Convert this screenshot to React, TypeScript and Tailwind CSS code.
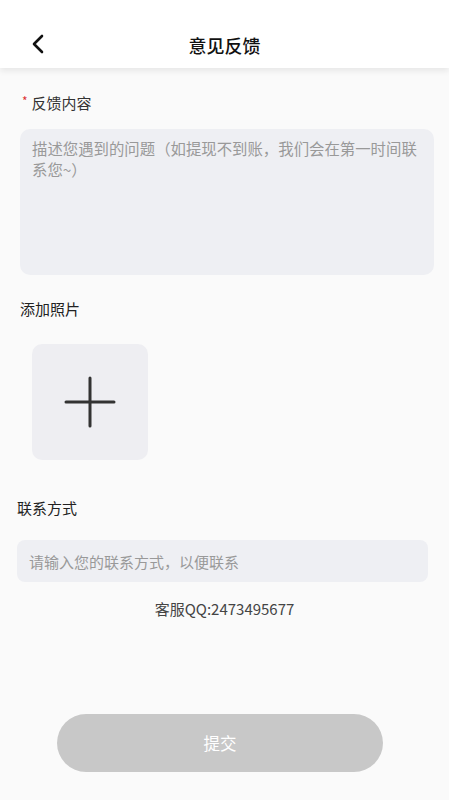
import React from "react";

const font = { fontFamily: '"Noto Sans CJK SC", "Noto Sans", sans-serif' };

export default function App() {
  return (
    <div style={font} className="flex min-h-[800px] w-full flex-col bg-[#fafafa] text-[#222]">
      <header className="relative flex h-[68px] items-center justify-center bg-white pt-[22px] shadow-[0_3px_6px_rgba(0,0,0,0.08)]">
        <button type="button" className="absolute left-[26px] top-[32px] flex h-6 w-6 items-center justify-center">
          <svg width="16" height="22" viewBox="0 0 16 22" fill="none">
            <path d="M12 3 L4 11 L12 19" stroke="#111" strokeWidth="2.6" strokeLinecap="round" strokeLinejoin="round" />
          </svg>
        </button>
        <h1 className="text-[18px] font-medium text-[#111]">意见反馈</h1>
      </header>

      <div className="flex flex-col px-[20px]">
        <div className="mt-[24px] flex items-center text-[15px] leading-[22px] text-[#333]">
          <span className="ml-[2px] mr-[4px] mt-[-4px] text-[12px] text-[#d33]">*</span>
          反馈内容
        </div>
        <textarea
          placeholder="描述您遇到的问题（如提现不到账，我们会在第一时间联系您~）"
          className="mt-[15px] h-[146px] w-[414px] resize-none rounded-[10px] bg-[#eeeff3] px-[12px] py-[9px] text-[15.4px] leading-[21px] text-[#333] outline-none placeholder:text-[#999]"
        />

        <div className="mt-[23px] text-[15px] leading-[22px] text-[#222]">添加照片</div>
        <div className="ml-[12px] mt-[24px] flex h-[116px] w-[116px] items-center justify-center rounded-[10px] bg-[#eeeef2]">
          <svg width="52" height="52" viewBox="0 0 52 52" fill="none">
            <path d="M26 2 V50 M2 26 H50" stroke="#333" strokeWidth="3" strokeLinecap="round" />
          </svg>
        </div>

        <div className="ml-[-3px] mt-[37px] text-[15px] leading-[22px] text-[#222]">联系方式</div>
        <input
          placeholder="请输入您的联系方式，以便联系"
          className="ml-[-3px] mt-[21px] h-[42px] w-[411px] rounded-[8px] bg-[#eeeff3] px-[12px] text-[15px] text-[#333] outline-none placeholder:text-[#999]"
        />
        <div className="mt-[16px] text-center text-[15px] leading-[22px] text-[#444]">客服QQ:2473495677</div>
      </div>

      <div className="mt-[94px] flex justify-center">
        <button
          type="button"
          className="ml-[-9px] h-[58px] w-[326px] rounded-full bg-[#c8c8c8] text-[16.5px] text-white"
        >
          提交
        </button>
      </div>
    </div>
  );
}
